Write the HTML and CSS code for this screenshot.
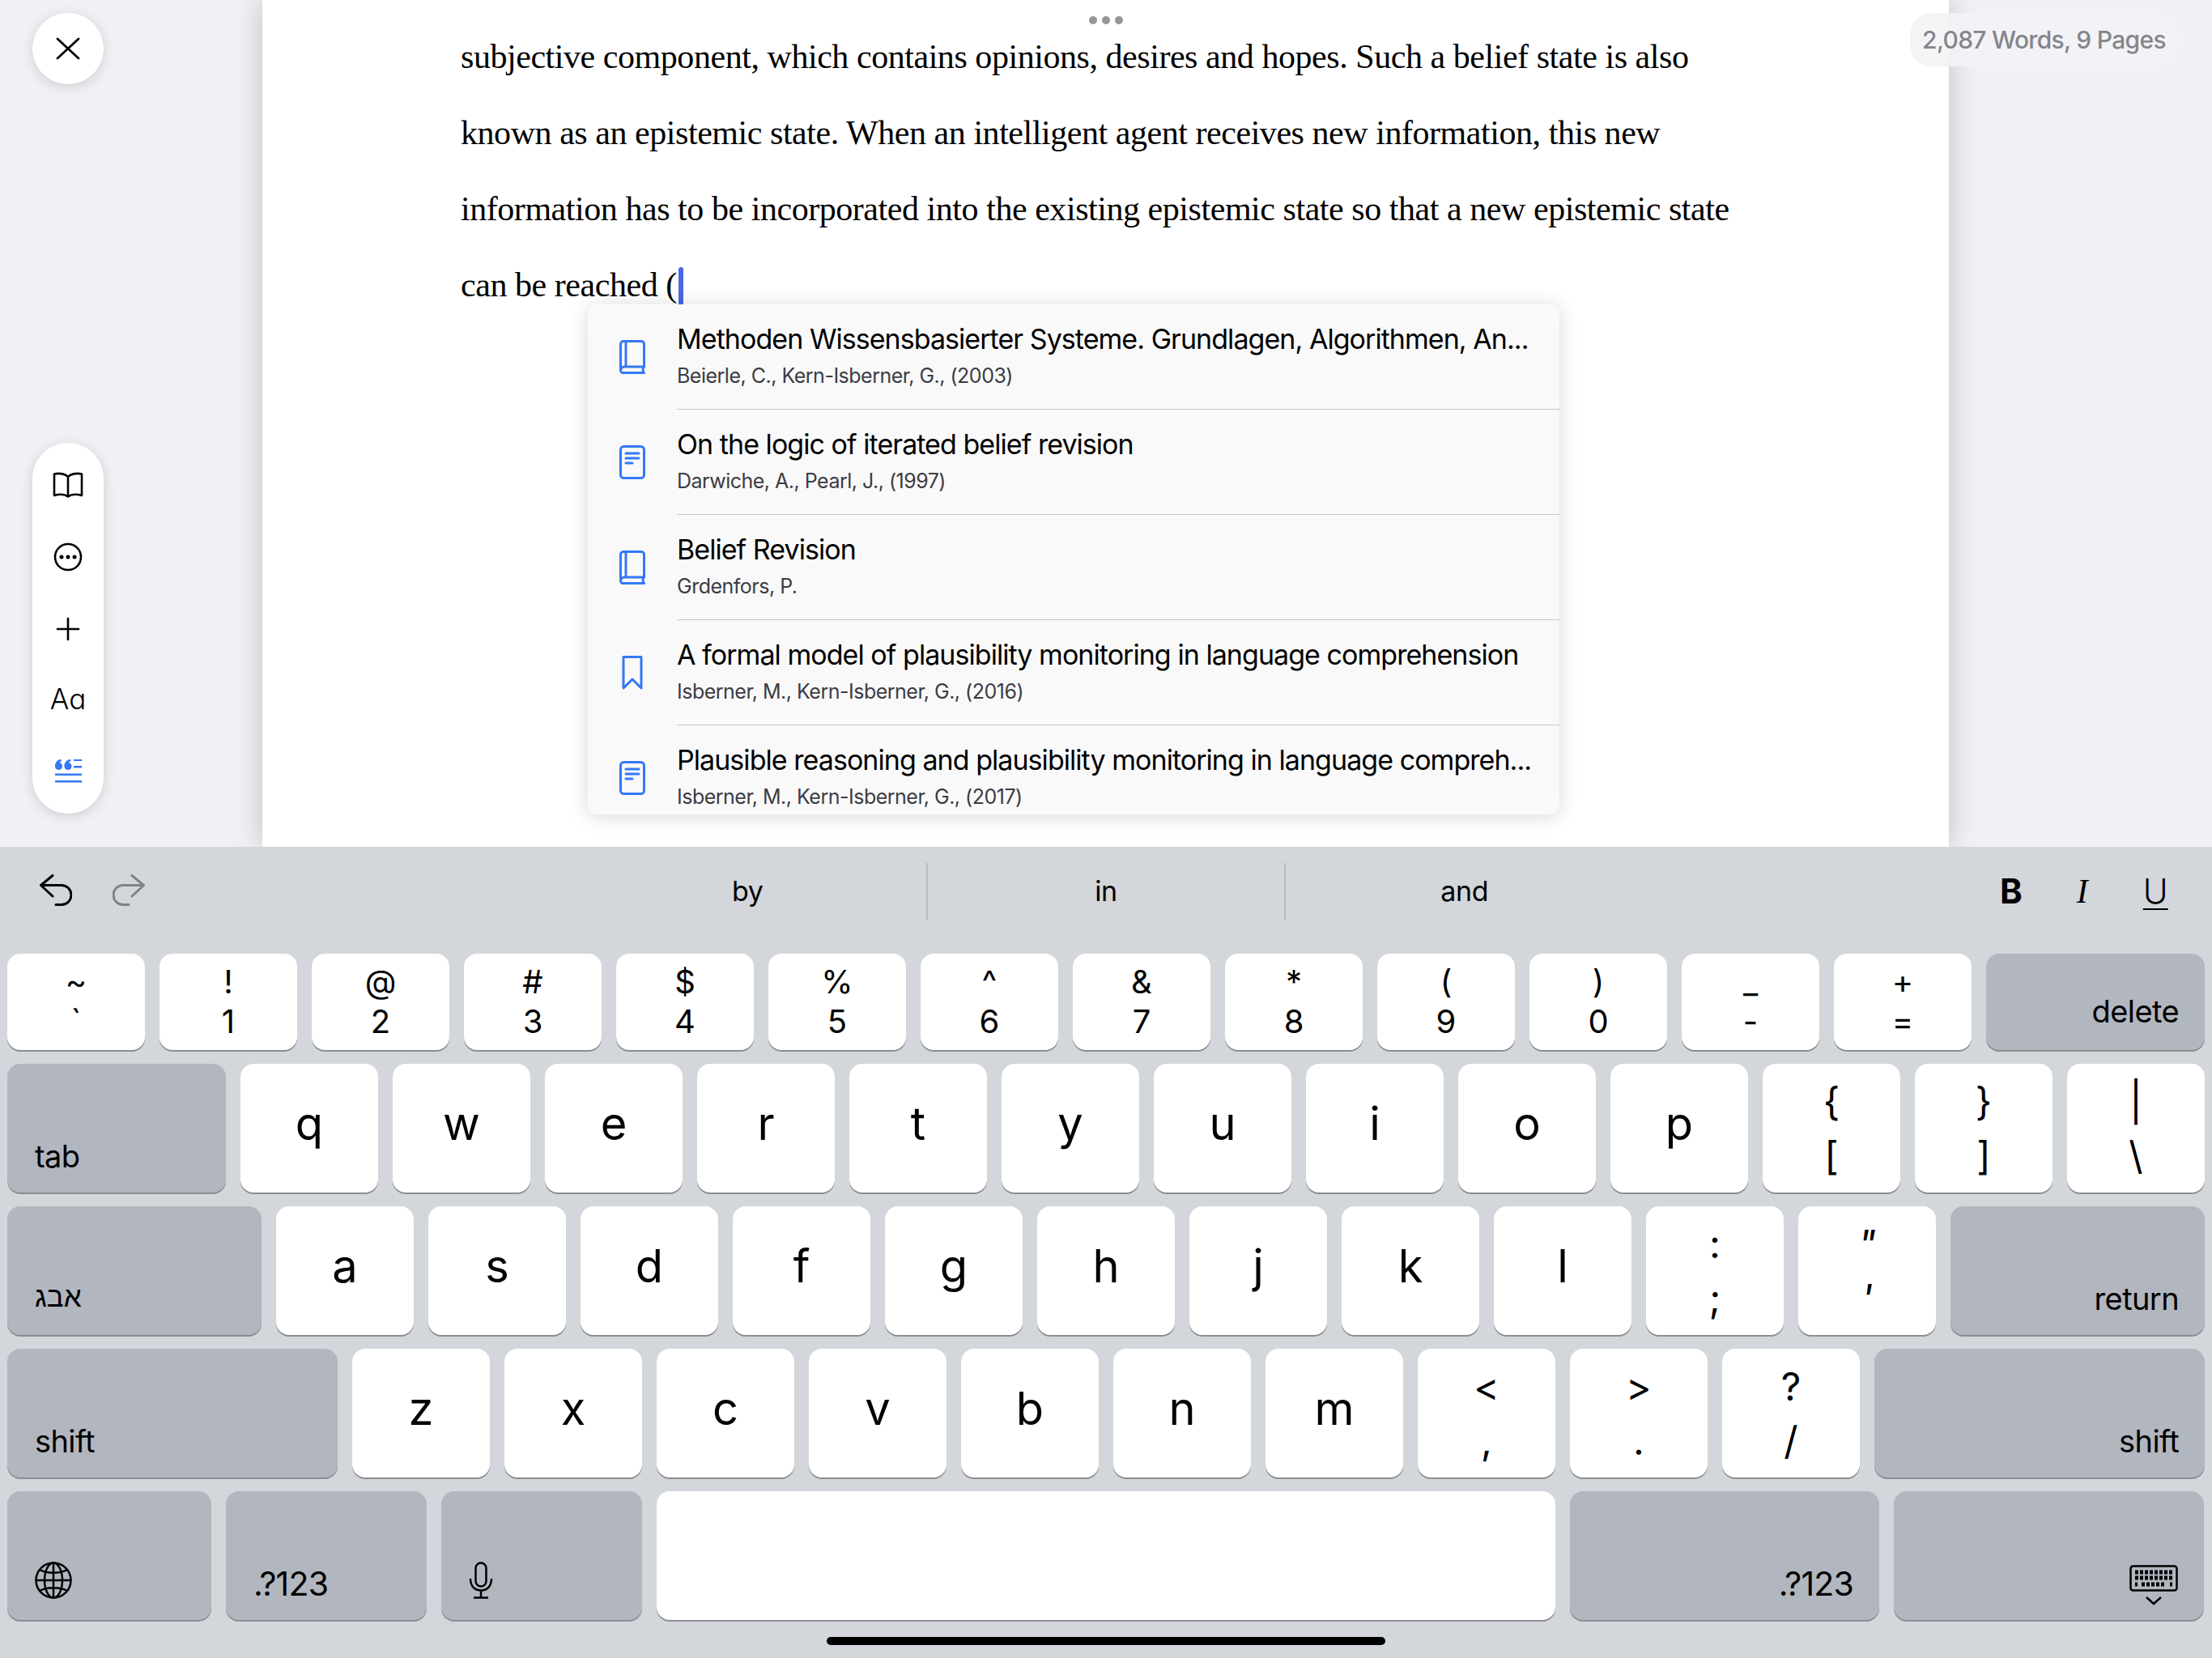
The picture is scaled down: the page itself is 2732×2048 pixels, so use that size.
FILE: index.html
```html
<!DOCTYPE html>
<html>
<head>
  <meta charset="utf-8">
  <title>Document editor</title>
  <link rel="stylesheet" href="styles.css">
</head>

<body>

<svg class="defs" width="0" height="0">
  <symbol id="ref-book" viewBox="0 0 32 42">
    <path d="M5 1.500H27a3.500 3.500 0 0 1 3.500 3.500V33H6.500A4.500 4.500 0 0 0 1.500 37.500V5A3.500 3.500 0 0 1 5 1.500ZM8 2V33M1.500 37.500A3 3 0 0 0 5 40.500H30.500M30.500 33C28.500 35 28.500 38.500 30.500 40.500"/>
  </symbol>
  <symbol id="ref-doc" viewBox="0 0 32 42">
    <rect x="1.500" y="1.500" width="29" height="39" rx="4"/>
    <path d="M8 10H24M8 16H24M8 22H16"/>
  </symbol>
</svg>

<div class="workspace">
  <button class="round-btn close-btn">
    <svg width="30" height="28" viewBox="0 0 30 28"><path d="M2 2L28 26M28 2L2 26"/></svg>
  </button>

  <div class="side-tools">
    <svg width="38" height="32" viewBox="0 0 38 32" class="tool-icon"><path d="M19 6C16 2.500 9 1 2 2.500V29C9 27 15 27.500 19 30.500C23 27.500 29 27 36 29V2.500C29 1 22 2.500 19 6ZM19 6V30"/></svg>
    <svg width="36" height="36" viewBox="0 0 36 36" class="tool-icon"><circle cx="18" cy="18" r="16"/><circle class="dot" cx="10" cy="18" r="2.500"/><circle class="dot" cx="18" cy="18" r="2.500"/><circle class="dot" cx="26" cy="18" r="2.500"/></svg>
    <svg width="30" height="30" viewBox="0 0 30 30" class="tool-icon"><path d="M15 2V28M2 15H28"/></svg>
    <span class="tool-text">Aa</span>
    <svg width="33" height="29" viewBox="0 0 33 29" class="tool-quote"><circle cx="4.500" cy="8.500" r="4.500"/><circle cx="16" cy="8.500" r="4.500"/><path d="M0 8.500C0 3.500 3 .5 7.500 0L8 2C5.500 3 4 5 4.500 8.500ZM11.500 8.500C11.500 3.500 14.500 .5 19 0L19.500 2C17 3 15.500 5 16 8.500ZM23 0H33V2H23ZM23 8H33V10.500H23ZM0 17.500H33V20H0ZM0 26H33V28.500H0Z"/></svg>
  </div>

  <div class="sheet">
    <div class="doc-line">subjective component, which contains opinions, desires and hopes. Such a belief state is also</div>
    <div class="doc-line">known as an epistemic state. When an intelligent agent receives new information, this new</div>
    <div class="doc-line">information has to be incorporated into the existing epistemic state so that a new epistemic state</div>
    <div class="doc-line">can be reached (<span class="caret"></span></div>
  </div>

  <div class="grip"><i></i><i></i><i></i></div>
  <div class="word-count">2,087 Words, 9 Pages</div>

  <div class="ref-popup">
    <div class="ref-row">
      <svg class="ref-icon"><use href="#ref-book"/></svg>
      <div class="ref-body">
        <div class="ref-title">Methoden Wissensbasierter Systeme. Grundlagen, Algorithmen, An...</div>
        <div class="ref-meta">Beierle, C., Kern-Isberner, G., (2003)</div>
      </div>
    </div>
    <div class="ref-row">
      <svg class="ref-icon"><use href="#ref-doc"/></svg>
      <div class="ref-body">
        <div class="ref-title">On the logic of iterated belief revision</div>
        <div class="ref-meta">Darwiche, A., Pearl, J., (1997)</div>
      </div>
    </div>
    <div class="ref-row">
      <svg class="ref-icon"><use href="#ref-book"/></svg>
      <div class="ref-body">
        <div class="ref-title">Belief Revision</div>
        <div class="ref-meta">Grdenfors, P.</div>
      </div>
    </div>
    <div class="ref-row">
      <svg class="ref-icon" viewBox="0 0 32 42"><path d="M5 1.500H27V40L16 29L5 40Z"/></svg>
      <div class="ref-body">
        <div class="ref-title">A formal model of plausibility monitoring in language comprehension</div>
        <div class="ref-meta">Isberner, M., Kern-Isberner, G., (2016)</div>
      </div>
    </div>
    <div class="ref-row">
      <svg class="ref-icon"><use href="#ref-doc"/></svg>
      <div class="ref-body">
        <div class="ref-title">Plausible reasoning and plausibility monitoring in language compreh...</div>
        <div class="ref-meta">Isberner, M., Kern-Isberner, G., (2017)</div>
      </div>
    </div>
  </div>
</div>

<div class="keyboard">
  <div class="assist-bar">
    <div class="assist-undo">
      <svg width="40" height="39" viewBox="0 0 40 39"><path d="M16 1.500L1.500 13.500L16 27M2 13.500H27A12 12 0 0 1 27 37.500H20"/></svg>
      <svg class="redo" width="40" height="39" viewBox="0 0 40 39"><path d="M24 1.500L38.500 13.500L24 27M38 13.500H13A12 12 0 0 0 13 37.500H20"/></svg>
    </div>
    <div class="suggestions">
      <span>by</span>
      <span>in</span>
      <span>and</span>
    </div>
    <div class="assist-format">
      <span class="fmt-b">B</span>
      <span class="fmt-i">I</span>
      <span class="fmt-u">U</span>
    </div>
  </div>

  <div class="key-row row-num">
    <div class="key sym"><span>~</span><span>`</span></div>
    <div class="key sym"><span>!</span><span>1</span></div>
    <div class="key sym"><span>@</span><span>2</span></div>
    <div class="key sym"><span>#</span><span>3</span></div>
    <div class="key sym"><span>$</span><span>4</span></div>
    <div class="key sym"><span>%</span><span>5</span></div>
    <div class="key sym"><span>^</span><span>6</span></div>
    <div class="key sym"><span>&amp;</span><span>7</span></div>
    <div class="key sym"><span>*</span><span>8</span></div>
    <div class="key sym"><span>(</span><span>9</span></div>
    <div class="key sym"><span>)</span><span>0</span></div>
    <div class="key sym"><span>_</span><span>-</span></div>
    <div class="key sym"><span>+</span><span>=</span></div>
    <div class="key action right w-270">delete</div>
  </div>

  <div class="key-row">
    <div class="key action w-270">tab</div>
    <div class="key letter">q</div>
    <div class="key letter">w</div>
    <div class="key letter">e</div>
    <div class="key letter">r</div>
    <div class="key letter">t</div>
    <div class="key letter">y</div>
    <div class="key letter">u</div>
    <div class="key letter">i</div>
    <div class="key letter">o</div>
    <div class="key letter">p</div>
    <div class="key sym"><span>{</span><span>[</span></div>
    <div class="key sym"><span>}</span><span>]</span></div>
    <div class="key sym"><span>|</span><span>\</span></div>
  </div>

  <div class="key-row">
    <div class="key action w-314 hebrew">אבג</div>
    <div class="key letter">a</div>
    <div class="key letter">s</div>
    <div class="key letter">d</div>
    <div class="key letter">f</div>
    <div class="key letter">g</div>
    <div class="key letter">h</div>
    <div class="key letter">j</div>
    <div class="key letter">k</div>
    <div class="key letter">l</div>
    <div class="key sym"><span>:</span><span>;</span></div>
    <div class="key sym slant"><span>"</span><span>'</span></div>
    <div class="key action right w-314">return</div>
  </div>

  <div class="key-row">
    <div class="key action w-408">shift</div>
    <div class="key letter">z</div>
    <div class="key letter">x</div>
    <div class="key letter">c</div>
    <div class="key letter">v</div>
    <div class="key letter">b</div>
    <div class="key letter">n</div>
    <div class="key letter">m</div>
    <div class="key sym"><span>&lt;</span><span>,</span></div>
    <div class="key sym"><span>&gt;</span><span>.</span></div>
    <div class="key sym"><span>?</span><span>/</span></div>
    <div class="key action right w-408">shift</div>
  </div>

  <div class="key-row">
    <div class="key action w-252">
      <svg class="key-icon" width="46" height="46" viewBox="0 0 46 46"><circle cx="23" cy="23" r="21.500"/><ellipse cx="23" cy="23" rx="11" ry="21.500"/><path d="M23 1.500V44.500M1.500 23H44.500M6 10C15 15 31 15 40 10M6 36C15 31 31 31 40 36"/></svg>
    </div>
    <div class="key action num-label w-248">.?123</div>
    <div class="key action w-248">
      <svg class="key-icon" width="30" height="46" viewBox="0 0 30 46"><rect x="8.500" y="1.500" width="13" height="29" rx="6.500"/><path d="M2 21C2 30 7 35.500 15 35.500C23 35.500 28 30 28 21M15 36V44M6 44.500H24"/></svg>
    </div>
    <div class="key space"></div>
    <div class="key action num-label right w-382">.?123</div>
    <div class="key action right w-383">
      <svg class="key-icon hide-kb" width="60" height="50" viewBox="0 0 60 50"><rect x="1.500" y="1.500" width="57" height="30" rx="3"/><path class="kb-keys" d="M7 9H53M7 16H53M7 24H10M15 24H45M50 24H53"/><path d="M21 40L30 48L39 40"/></svg>
    </div>
  </div>

  <div class="home-bar"></div>
</div>

</body>
</html>
```

FILE: styles.css
```css
* {
  box-sizing: border-box;
}

html, body {
  margin: 0;
  padding: 0;
}

body {
  width: 2732px;
  height: 2048px;
  overflow: hidden;
  font-family: 'Inter', sans-serif;
  color: #000;
  background-color: #d3d6db;
}

.defs {
  position: absolute;
}

/* top part, the document */

.workspace {
  position: relative;
  height: 1046px;
  overflow: hidden;
  background-color: #f0f0f5;
}

.sheet {
  width: 2083px;
  height: 100%;
  margin-left: 324px;
  padding: 23px 0 0 245px;
  background-color: #fff;
  box-shadow: 0 0 34px rgba(0, 0, 0, 0.2);
  font-family: 'Liberation Serif', serif;
  font-size: 42px;
  letter-spacing: -0.45px;
}

.doc-line {
  height: 94px;
  line-height: 94px;
  white-space: nowrap;
}

.caret {
  display: inline-block;
  width: 6px;
  height: 48px;
  margin-left: 2px;
  vertical-align: -12px;
  border-radius: 3px;
  background-color: #4a66e6;
}

.round-btn {
  position: absolute;
  top: 16px;
  left: 40px;
  width: 88px;
  height: 88px;
  display: flex;
  align-items: center;
  justify-content: center;
  padding: 0;
  border: none;
  border-radius: 50%;
  background-color: #fff;
  box-shadow: 0 3px 16px rgba(0, 0, 0, 0.14);
}

.close-btn path {
  fill: none;
  stroke: #000;
  stroke-width: 2.800;
  stroke-linecap: round;
}

.side-tools {
  position: absolute;
  top: 547px;
  left: 40px;
  width: 88px;
  height: 458px;
  display: flex;
  flex-direction: column;
  align-items: center;
  justify-content: space-between;
  padding: 36px 0 38px;
  border-radius: 44px;
  background-color: #fff;
  box-shadow: 0 3px 16px rgba(0, 0, 0, 0.14);
}

.tool-icon {
  fill: none;
  stroke: #000;
  stroke-width: 2.600;
  stroke-linecap: round;
  stroke-linejoin: round;
}

.tool-icon .dot {
  fill: #000;
  stroke: none;
}

.tool-text {
  height: 36px;
  padding-bottom: 4px;
  font-size: 35px;
  line-height: 32px;
  font-weight: 300;
  font-feature-settings: "cv11";
}

.tool-quote {
  fill: #3478f6;
}

.grip {
  position: absolute;
  top: 20px;
  left: 1345px;
  display: flex;
  gap: 6px;
}

.grip i {
  width: 10px;
  height: 10px;
  border-radius: 50%;
  background-color: #969696;
}

.word-count {
  position: absolute;
  top: 16px;
  left: 2359px;
  width: 331px;
  height: 66px;
  line-height: 66px;
  text-align: center;
  white-space: nowrap;
  border-radius: 26px;
  background-color: rgba(243, 243, 246, 0.92);
  color: #85858a;
  font-size: 30px;
  font-weight: 500;
  letter-spacing: -0.7px;
}

/* citation suggestions */

.ref-popup {
  position: absolute;
  top: 376px;
  left: 726px;
  width: 1200px;
  height: 630px;
  overflow: hidden;
  border-radius: 10px;
  background-color: #f9f9f9;
  box-shadow: 0 2px 24px rgba(0, 0, 0, 0.16);
}

.ref-row {
  display: flex;
  align-items: center;
  height: 130px;
  flex-shrink: 0;
}

.ref-row:last-child .ref-body {
  border-bottom: none;
}

.ref-icon {
  width: 32px;
  height: 42px;
  margin: 0 39px 0 39px;
  flex-shrink: 0;
  fill: none;
  stroke: #3478f6;
  stroke-width: 3;
  stroke-linejoin: round;
  stroke-linecap: round;
}

.ref-body {
  flex: 1;
  height: 130px;
  padding-top: 21px;
  border-bottom: 1px solid #c6c6c8;
  white-space: nowrap;
}

.ref-title {
  font-size: 34px;
  line-height: 44px;
  letter-spacing: -0.95px;
}

.ref-meta {
  margin-top: 7px;
  font-size: 25px;
  line-height: 32px;
  letter-spacing: -0.5px;
  color: #3c3c43;
}

/* keyboard */

.keyboard {
  position: relative;
  height: 1002px;
  background-color: #d3d6db;
}

.assist-bar {
  position: relative;
  display: flex;
  justify-content: center;
  height: 132px;
  padding-top: 20px;
}

.assist-undo {
  position: absolute;
  top: 34px;
  left: 49px;
  display: flex;
  gap: 50px;
}

.assist-undo svg {
  fill: none;
  stroke: #000;
  stroke-width: 3;
  stroke-linecap: round;
  stroke-linejoin: round;
}

.assist-undo .redo {
  stroke: #808286;
}

.suggestions {
  display: flex;
  width: 1326px;
  height: 70px;
}

.suggestions span {
  flex: 1;
  line-height: 70px;
  text-align: center;
  font-size: 34px;
  letter-spacing: -0.3px;
  border-left: 2px solid #b9bcc2;
}

.suggestions span:first-child {
  border-left: none;
}

.assist-format {
  position: absolute;
  top: 30px;
  left: 2470px;
  display: flex;
  gap: 67px;
  font-size: 42px;
  line-height: 50px;
}

.fmt-b {
  font-weight: 700;
}

.fmt-i {
  font-family: 'Liberation Serif', serif;
  font-style: italic;
}

.fmt-u {
  margin-left: 1px;
  font-weight: 300;
  text-decoration: underline;
  text-decoration-thickness: 2px;
  text-underline-offset: 6px;
}

.key-row {
  display: flex;
  gap: 18px;
  height: 159px;
  margin-bottom: 17px;
  padding: 0 9px;
}

.row-num {
  height: 119px;
}

.key {
  position: relative;
  width: 170px;
  flex-shrink: 0;
  border-radius: 16px;
  background-color: #fff;
  box-shadow: 0 2px 0 #8b8d91;
}

.letter {
  display: flex;
  align-items: center;
  justify-content: center;
  padding-bottom: 12px;
  font-size: 56px;
}

.sym {
  display: flex;
  flex-direction: column;
  align-items: center;
  justify-content: center;
  font-size: 48px;
  line-height: 67px;
}

.slant {
  font-style: italic;
}

.row-num .sym {
  padding-bottom: 2px;
  font-size: 40px;
  line-height: 49px;
}

.action {
  display: flex;
  align-items: flex-end;
  padding: 0 32px 23px 34px;
  background-color: #b2b6bf;
  font-size: 38px;
  line-height: 44px;
  letter-spacing: -0.6px;
}

.row-num .action {
  padding-bottom: 26px;
}

.num-label {
  font-size: 41px;
  letter-spacing: -0.8px;
}

.right {
  justify-content: flex-end;
}

.hebrew {
  padding-bottom: 25px;
  font-family: 'Liberation Sans', sans-serif;
  font-size: 35px;
  letter-spacing: 0;
}

.key-icon {
  margin-bottom: 3px;
  fill: none;
  stroke: #000;
  stroke-width: 2.500;
}

.hide-kb {
  margin-bottom: -5px;
}

.kb-keys {
  stroke-width: 5;
  stroke-dasharray: 4 2;
}

.w-252 { width: 252px; }
.w-248 { width: 248px; }
.w-270 { width: 270px; }
.w-314 { width: 314px; }
.w-382 { width: 382px; }
.w-383 { width: 383px; }
.w-408 { width: 408px; }

.space {
  width: 1110px;
}

.home-bar {
  position: absolute;
  top: 976px;
  left: 1021px;
  width: 690px;
  height: 10px;
  border-radius: 5px;
  background-color: #000;
}
```
